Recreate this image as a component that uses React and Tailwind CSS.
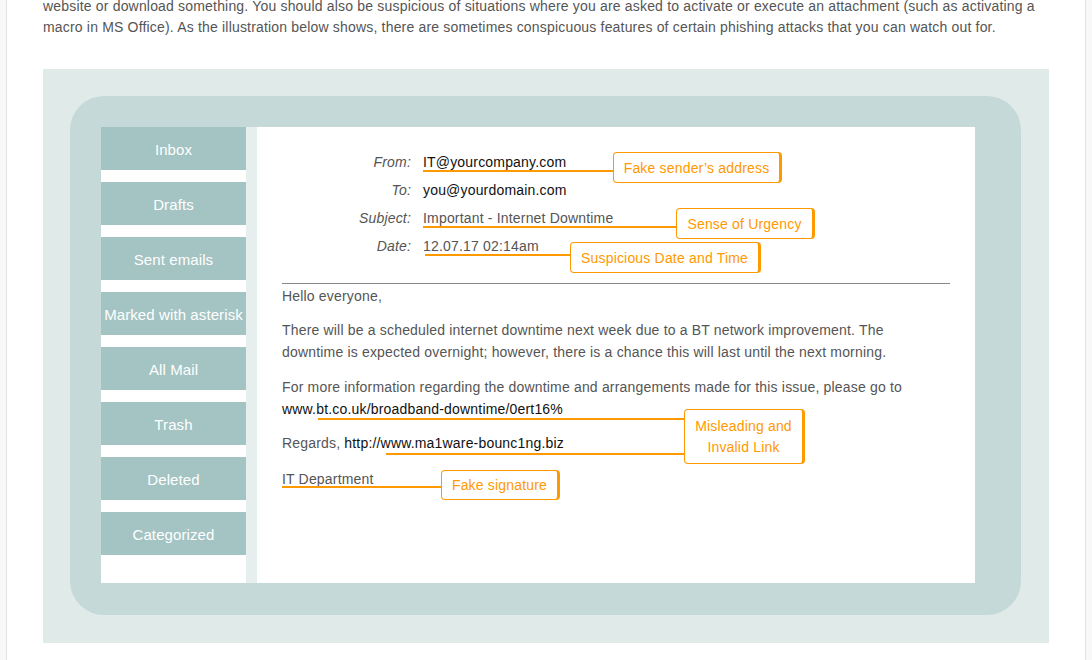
import React from "react";

const folders = [
  "Inbox",
  "Drafts",
  "Sent emails",
  "Marked with asterisk",
  "All Mail",
  "Trash",
  "Deleted",
  "Categorized",
];

// orange callout box with thicker right edge
const Callout = ({ className, children }) => (
  <div
    className={
      "absolute flex flex-col items-center justify-center bg-white border border-[#ff9900] border-r-[3px] rounded-[4px] text-[14px] leading-[21px] text-[#ff9900] pt-[1px] " +
      className
    }
  >
    {children}
  </div>
);

const Line = ({ className }) => (
  <div className={"absolute h-[2px] bg-[#ff9900] " + className} />
);

export default function App() {
  return (
    <div className="min-h-[660px] bg-[#f8f8f8] font-['Liberation_Sans',Arial,sans-serif] tracking-[0.18px]">
      <div className="ml-[6px] w-[1080px] h-[660px] overflow-hidden bg-white border-x border-[#e3e3e3] px-[36px]">
        {/* intro paragraph */}
        <p className="-mt-[4px] text-[14px] leading-[21px] text-[#555] whitespace-nowrap">
          website or download something. You should also be suspicious of situations where you are asked to activate or execute an attachment (such as activating a
          <br />
          macro in MS Office). As the illustration below shows, there are sometimes conspicuous features of certain phishing attacks that you can watch out for.
        </p>

        {/* illustration */}
        <div className="mt-[31px] w-[1006px] bg-[#e0eae9] p-[27px] pr-[28px] pb-[28px]">
          <div className="flex bg-[#c5d9d8] rounded-[34px] pl-[31px] pt-[31px] pr-[46px] pb-[32px]">
            {/* folder list */}
            <div className="w-[145px] h-[456px] bg-white flex flex-col gap-[12px]">
              {folders.map((f) => (
                <div
                  key={f}
                  className="h-[43px] pt-[4px] bg-[#a3c4c3] flex items-center justify-center text-[15px] text-white whitespace-nowrap tracking-[0.1px]"
                >
                  {f}
                </div>
              ))}
            </div>
            <div className="w-[11px] bg-[#e6efee]" />

            {/* message */}
            <div className="relative flex-1 bg-white px-[25px] pt-[21px] text-[14px] text-[#555]">
              <div className="flex flex-col">
                {[
                  ["From:", "IT@yourcompany.com", "text-[#111]"],
                  ["To:", "you@yourdomain.com", "text-[#111]"],
                  ["Subject:", "Important - Internet Downtime", "text-[#555]"],
                  ["Date:", "12.07.17 02:14am", "text-[#555]"],
                ].map(([label, value, color]) => (
                  <div key={label} className="flex h-[28px] items-center gap-[12px]">
                    <span className="w-[129px] text-right italic">{label}</span>
                    <span className={color}>{value}</span>
                  </div>
                ))}
              </div>

              <div className="mt-[23px] h-px bg-[#888]" />

              <div className="leading-[22px] pt-[1px]">
                <p className="mb-[12px]">Hello everyone,</p>
                <p className="mb-[13px]">
                  There will be a scheduled internet downtime next week due to a BT network improvement. The
                  <br />
                  downtime is expected overnight; however, there is a chance this will last until the next morning.
                </p>
                <p className="mb-[12px]">
                  For more information regarding the downtime and arrangements made for this issue, please go to
                  <br />
                  <span className="text-[#111]">www.bt.co.uk/broadband-downtime/0ert16%</span>
                </p>
                <p className="mb-[14px]">
                  Regards, <span className="text-[#111]">http://www.ma1ware-bounc1ng.biz</span>
                </p>
                <p>IT Department</p>
              </div>

              {/* annotations */}
              <Line className="left-[166px] top-[43px] w-[190px]" />
              <Callout className="left-[356px] top-[25px] w-[169px] h-[31px]">Fake sender’s address</Callout>

              <Line className="left-[166px] top-[99px] w-[253px]" />
              <Callout className="left-[419px] top-[81px] w-[139px] h-[31px]">Sense of Urgency</Callout>

              <Line className="left-[168px] top-[127px] w-[145px]" />
              <Callout className="left-[313px] top-[115px] w-[191px] h-[31px]">Suspicious Date and Time</Callout>

              <Line className="left-[61px] top-[291px] w-[366px]" />
              <Line className="left-[129px] top-[326px] w-[298px]" />
              <Callout className="left-[427px] top-[282px] w-[121px] h-[55px]">
                <span>Misleading and</span>
                <span>Invalid Link</span>
              </Callout>

              <Line className="left-[25px] top-[359px] w-[159px]" />
              <Callout className="left-[184px] top-[343px] w-[119px] h-[30px]">Fake signature</Callout>
            </div>
          </div>
        </div>
      </div>
    </div>
  );
}
